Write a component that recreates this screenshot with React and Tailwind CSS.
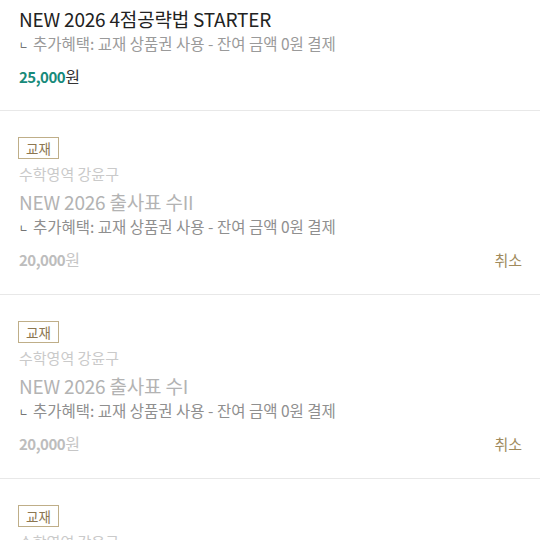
import React from "react";

const font = { fontFamily: '"Noto Sans CJK KR", "Noto Sans", sans-serif' };

function Benefit({ dim }) {
  return (
    <div className={`flex items-center h-[20px] text-[15.5px] ${dim ? "text-[#8f8f8f]" : "text-[#9a9a9a]"}`}>
      <span className="text-[10px] leading-none w-[14px] text-[#555] mt-[2px]">ㄴ</span>
      <span>추가혜택: 교재 상품권 사용 - 잔여 금액 0원 결제</span>
    </div>
  );
}

function Item({ title }) {
  return (
    <div className="pl-[19px] pr-[18px] pt-[26px] pb-[25px] border-b border-[#e8e8e8]">
      <div className="flex -ml-[1px]">
        <span className="h-[22px] px-[7px] border border-[#bfae88] text-[#8c7650] text-[13.5px] leading-[20px]">교재</span>
      </div>
      <div className="mt-[2px] h-[26px] leading-[26px] text-[15px] text-[#cacaca]">수학영역 강윤구</div>
      <div className="h-[30px] leading-[30px] text-[19px] text-[#b3b3b3] tracking-[-0.2px]">{title}</div>
      <Benefit dim />
      <div className="mt-[12px] flex items-center justify-between h-[20px]">
        <div className="text-[15px] leading-[20px]">
          <span className="font-bold text-[#bdbdbd] tracking-[-0.5px]">20,000</span>
          <span className="text-[#c6c6c6] text-[16px]">원</span>
        </div>
        <span className="text-[15px] text-[#a08a5c] mt-[2px]">취소</span>
      </div>
    </div>
  );
}

export default function App() {
  return (
    <div className="w-[540px] h-[540px] overflow-hidden bg-white" style={font}>
      <div className="pl-[19px] pr-[18px] pt-[4px] pb-[24px] border-b border-[#e8e8e8]">
        <div className="h-[30px] leading-[30px] text-[19px] text-[#222] tracking-[-0.2px]">NEW 2026 4점공략법 STARTER</div>
        <Benefit />
        <div className="mt-[12px] h-[20px] text-[15px] leading-[20px]">
          <span className="font-bold text-[#178a7a] tracking-[-0.5px]">25,000</span>
          <span className="text-[#333] text-[16px]">원</span>
        </div>
      </div>
      <Item title="NEW 2026 출사표 수II" />
      <Item title="NEW 2026 출사표 수I" />
      <Item title="NEW 2026 출사표 수I" />
    </div>
  );
}
